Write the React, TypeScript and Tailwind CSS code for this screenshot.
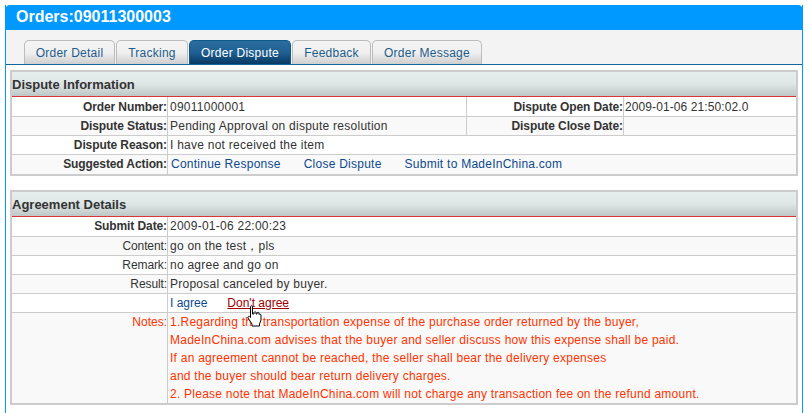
function Row({label,children,alt,h="h-[19px]"}:{label:string;children?:React.ReactNode;alt?:boolean;h?:string}){
  return <div className={`grid grid-cols-[156px_1fr] border-b border-[#ccc] last:border-b-0 ${h} ${alt?"bg-[#f9f9f9]":"bg-white"}`}>
    <div className="border-r border-[#ccc] text-right font-bold text-[#333] leading-[18px] tracking-[-0.1px]">{label}</div>
    <div className="pl-[2px] text-[#333] leading-[18px]">{children}</div>
  </div>;
}
function Head({children}:{children:React.ReactNode}){
  return <div className="h-[25px] border-b border-[#d9363a] bg-gradient-to-b from-[#e6eeee] via-[#dfe6e6] to-[#bfc6c6] text-[13px] font-bold text-[#333] leading-[26px] tracking-normal">{children}</div>;
}
function Tab({label,w,active}:{label:string;w:string;active?:boolean}){
  return <div className={`${w} h-[24px] rounded-t-[5px] border border-b-0 text-center leading-[24px] ${active?"border-[#0f5a8c] bg-gradient-to-b from-[#2c6d9f] via-[#1f5f91] to-[#073a63] text-white":"border-[#bbb] bg-gradient-to-b from-[#f4f4f4] via-[#f0f0f0] to-[#cfcfcf] text-[#1d5c8c]"}`}>{label}</div>;
}
const A="text-[#0b4a8f]";
const L="border-r border-[#ccc] text-right font-bold text-[#333] tracking-[-0.1px]";
export default function App(){
  return <div className="w-[809px] h-[413px] bg-white pt-[5px] pl-[5px] font-['Liberation_Sans',Arial,sans-serif] text-[12px] tracking-[0.25px] overflow-hidden">
    <div className="w-[798px] h-[408px] border-x border-[#0099ff]">
      <div className="-mx-px h-[25px] rounded-t-[5px] bg-[#0099ff] pl-[11px] text-[16px] font-bold text-white leading-[23px] tracking-normal">Orders:09011300003</div>
      <div className="h-[35px] bg-[#f3f3f3] border-b border-[#1565a0] pt-[10px] pl-[18px] flex gap-[1px]">
        <Tab label="Order Detail" w="w-[91px]"/>
        <Tab label="Tracking" w="w-[72px]"/>
        <Tab label="Order Dispute" w="w-[102px]" active/>
        <Tab label="Feedback" w="w-[79px]"/>
        <Tab label="Order Message" w="w-[110px]"/>
      </div>
      <div className="ml-[4px] mt-[5px] w-[788px] border-2 border-[#ccc]">
        <Head>Dispute Information</Head>
        <div className="grid grid-cols-[455px_1fr] border-b border-[#ccc] h-[20px] bg-white leading-[20px]">
          <div className="grid grid-cols-[156px_1fr] border-r border-[#ccc]">
            <div className={L}>Order Number:</div>
            <div className="pl-[2px] text-[#333]">09011000001</div>
          </div>
          <div className="grid grid-cols-[157px_1fr]">
            <div className={L}>Dispute Open Date:</div>
            <div className="pl-[1px] text-[#333] tracking-[0.1px]">2009-01-06 21:50:02.0</div>
          </div>
        </div>
        <div className="grid grid-cols-[455px_1fr] border-b border-[#ccc] h-[19px] bg-[#f9f9f9] leading-[19px]">
          <div className="grid grid-cols-[156px_1fr] border-r border-[#ccc]">
            <div className={L}>Dispute Status:</div>
            <div className="pl-[2px] text-[#333]">Pending Approval on dispute resolution</div>
          </div>
          <div className="grid grid-cols-[157px_1fr]">
            <div className={L}>Dispute Close Date:</div>
            <div></div>
          </div>
        </div>
        <Row label="Dispute Reason:">I have not received the item</Row>
        <Row label="Suggested Action:" alt>
          <div className={`flex gap-[23px] pl-px ${A}`}><span>Continue Response</span><span>Close Dispute</span><span>Submit to MadeInChina.com</span></div>
        </Row>
      </div>
      <div className="ml-[4px] mt-[14px] w-[788px] border-2 border-[#ccc]">
        <Head>Agreement Details</Head>
        <Row label="Submit Date:" h="h-[20px]">2009-01-06 22:00:23</Row>
        <div className="[&>div>div:first-child]:font-normal">
          <Row label="Content:" alt>go on the test，pls</Row>
          <Row label="Remark:">no agree and go on</Row>
          <Row label="Result:" alt>Proposal canceled by buyer.</Row>
          <div className="grid grid-cols-[156px_1fr] border-b border-[#ccc] h-[19px] bg-white">
            <div className="border-r border-[#ccc]"></div>
            <div className="relative pl-[2px] leading-[18px] flex gap-[20px] tracking-normal">
              <span className={A}>I agree</span>
              <span className="text-[#a00000] underline">Don't agree</span>
              <svg className="absolute left-[79px] top-[11px]" width="15" height="22" viewBox="0 0 15 22">
                <path d="M3.5 1.5 C3.5 .5 5.5 .5 5.5 1.5 V9 H7 V7.5 C7.5 6.5 8.8 6.5 9 7.5 V9 H10 V8 C10.5 7 11.7 7 12 8 V9.5 C12.5 8.8 13.7 9 14 10 V15 L12.5 19 V21 H5 V19 L1 13 C.5 11.5 2 10.5 3.5 12.5 Z" fill="#fff" stroke="#000" strokeWidth="1"/>
              </svg>
            </div>
          </div>
          <div className="grid grid-cols-[156px_1fr] bg-[#f9f9f9] h-[90px]">
            <div className="border-r border-[#ccc] text-right text-[#ff3300] leading-[18px] tracking-normal">Notes:</div>
            <div className="pl-[2px] text-[#ff3300] leading-[18px]">
              <div>1.Regarding the transportation expense of the purchase order returned by the buyer,</div>
              <div>MadeInChina.com advises that the buyer and seller discuss how this expense shall be paid.</div>
              <div>If an agreement cannot be reached, the seller shall bear the delivery expenses</div>
              <div>and the buyer should bear return delivery charges.</div>
              <div>2. Please note that MadeInChina.com will not charge any transaction fee on the refund amount.</div>
            </div>
          </div>
        </div>
      </div>
    </div>
  </div>;
}
